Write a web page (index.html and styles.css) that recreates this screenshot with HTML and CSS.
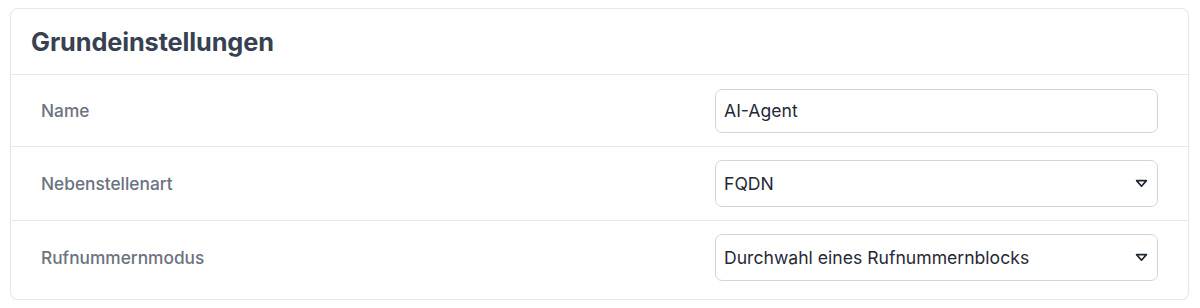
FILE: index.html
```html
<!DOCTYPE html>
<html lang="de">
<head>
<meta charset="utf-8">
<title>Grundeinstellungen</title>
<link rel="stylesheet" href="styles.css">
</head>
<body>
<section class="card">
  <header class="card-header">
    <h2 class="card-title">Grundeinstellungen</h2>
  </header>
  <div class="row row-first">
    <label class="label">Name</label>
    <div class="field field-input"><span class="value">AI-Agent</span></div>
  </div>
  <div class="row">
    <label class="label">Nebenstellenart</label>
    <div class="field field-select"><span class="value">FQDN</span>
      <svg class="caret" width="13" height="9" viewBox="0 0 13 9"><path d="M1.6 1.6h9.8L6.5 7.2z" fill="none" stroke="#1f2937" stroke-width="1.7" stroke-linejoin="round"/></svg>
    </div>
  </div>
  <div class="row row-last">
    <label class="label">Rufnummernmodus</label>
    <div class="field field-select"><span class="value">Durchwahl eines Rufnummernblocks</span>
      <svg class="caret" width="13" height="9" viewBox="0 0 13 9"><path d="M1.6 1.6h9.8L6.5 7.2z" fill="none" stroke="#1f2937" stroke-width="1.7" stroke-linejoin="round"/></svg>
    </div>
  </div>
</section>
</body>
</html>
```
FILE: styles.css
```css
html, body {
  margin: 0;
  padding: 0;
  background: #ffffff;
}
body {
  padding: 8px 11px 0 10px;
  font-family: Inter, "Noto Sans", "Liberation Sans", sans-serif;
}
.card {
  border: 1px solid #e5e7eb;
  border-radius: 8px;
  box-shadow: 0 1px 2px rgba(0,0,0,0.06);
  background: #fff;
  height: 292px;
  box-sizing: border-box;
  overflow: hidden;
}
.card-header {
  height: 65px;
  border-bottom: 1px solid #e5e7eb;
  display: flex;
  align-items: center;
  padding: 0 20px;
}
.card-title {
  margin: 0;
  font-size: 25.3px;
  font-weight: 700;
  color: #374151;
  letter-spacing: -0.1px;
}
.row {
  display: flex;
  align-items: center;
  justify-content: space-between;
  padding: 0 30px 0 30px;
  height: 73px;
  border-bottom: 1px solid #e5e7eb;
}
.row-first {
  height: 71px;
}
.row-last {
  border-bottom: none;
  height: auto;
  align-items: flex-start;
  padding-top: 13px;
}
.row-last .label {
  line-height: 47px;
}
.label {
  font-size: 17.3px;
  font-weight: 500;
  color: #6b7280;
}
.field {
  width: 443px;
  height: 44px;
  box-sizing: border-box;
  border: 1px solid #d1d5db;
  border-radius: 7px;
  display: flex;
  align-items: center;
  justify-content: space-between;
  padding: 0 9px 0 8px;
}
.field-select {
  height: 47px;
}
.value {
  font-size: 17.6px;
  color: #1f2937;
}
.caret {
  display: block;
}
```
